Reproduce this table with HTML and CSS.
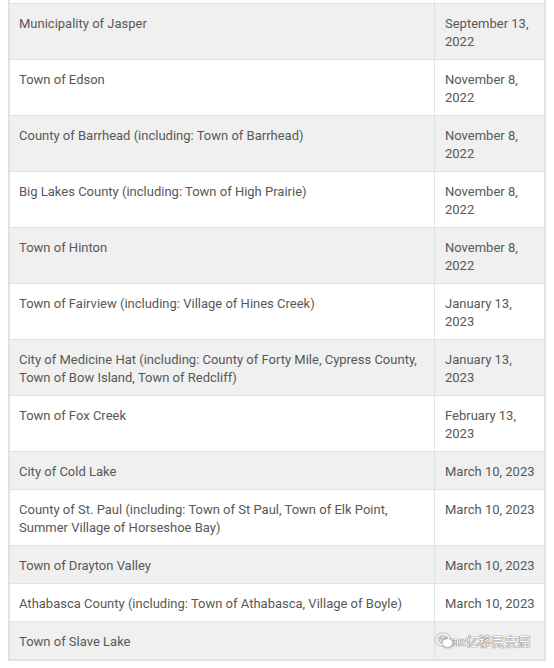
FILE: index.html
```html
<!DOCTYPE html>
<html>
<head>
<meta charset="utf-8">
<link rel="stylesheet" href="styles.css">
</head>
<body>
<div class="page">
<table class="dates">
  <tr class="cut"><td></td><td></td></tr>
  <tr class="alt"><td>Municipality of Jasper</td><td>September 13, 2022</td></tr>
  <tr><td>Town of Edson</td><td>November 8, 2022</td></tr>
  <tr class="alt"><td>County of Barrhead (including: Town of Barrhead)</td><td>November 8, 2022</td></tr>
  <tr><td>Big Lakes County (including: Town of High Prairie)</td><td>November 8, 2022</td></tr>
  <tr class="alt"><td>Town of Hinton</td><td>November 8, 2022</td></tr>
  <tr><td>Town of Fairview (including: Village of Hines Creek)</td><td>January 13, 2023</td></tr>
  <tr class="alt"><td>City of Medicine Hat (including: County of Forty Mile, Cypress County, Town of Bow Island, Town of Redcliff)</td><td>January 13, 2023</td></tr>
  <tr><td>Town of Fox Creek</td><td>February 13, 2023</td></tr>
  <tr class="alt"><td>City of Cold Lake</td><td>March 10, 2023</td></tr>
  <tr><td>County of St. Paul (including: Town of St Paul, Town of Elk Point, Summer Village of Horseshoe Bay)</td><td>March 10, 2023</td></tr>
  <tr class="alt"><td>Town of Drayton Valley</td><td>March 10, 2023</td></tr>
  <tr><td>Athabasca County (including: Town of Athabasca, Village of Boyle)</td><td>March 10, 2023</td></tr>
  <tr class="alt"><td>Town of Slave Lake</td><td></td></tr>
</table>
<div class="watermark">
  <svg class="wm-icon" width="18" height="16" viewBox="0 0 18 16">
    <ellipse cx="7" cy="6.5" rx="6.2" ry="5.2" fill="none" stroke="#fff" stroke-width="1.6"/>
    <ellipse cx="11.5" cy="10" rx="5.2" ry="4.3" fill="#fff" stroke="#bbb" stroke-width="0.8"/>
    <circle cx="5" cy="5.5" r="0.9" fill="#bbb"/>
    <circle cx="9" cy="5.5" r="0.9" fill="#bbb"/>
  </svg>
  <span class="wm-text">ax亿移民安居</span>
</div>
</div>
</body>
</html>
```
FILE: styles.css
```css
html, body {
  margin: 0;
  padding: 0;
  background: #fff;
}
.page {
  position: relative;
  padding: 0 8px;
  height: 668px;
  overflow: hidden;
}
.dates {
  width: 100%;
  border-collapse: collapse;
  font-family: Roboto, "Noto Sans", sans-serif;
  font-size: 13px;
  line-height: 18px;
  color: #585858;
}
.dates td {
  border: 1px solid #e2e2e2;
  padding: 11px 9px 8px 9px;
  vertical-align: top;
}
.dates td:first-child {
  border-left: 2px solid #e2e2e2;
}
.dates td:last-child {
  width: 91px;
  padding-left: 10px;
  padding-right: 8px;
  border-right: 2px solid #e2e2e2;
}
.dates tr:last-child td {
  border-bottom: 2px solid #e2e2e2;
}
.dates tr.cut td {
  padding: 0;
  height: 3px;
  border-top: none;
  line-height: 0;
}
.dates tr.alt td {
  background: #f0f0f0;
}
.watermark {
  position: absolute;
  left: 436px;
  top: 632px;
  display: flex;
  align-items: center;
}
.wm-icon {
  filter: drop-shadow(0 0 1px rgba(0,0,0,0.55));
}
.wm-text {
  font-family: "Noto Sans CJK SC", sans-serif;
  font-size: 13px;
  line-height: 18px;
  color: #fff;
  margin-left: -2px;
  text-shadow: 0 0 1px rgba(0,0,0,0.7), 0 0 1px rgba(0,0,0,0.6);
}
```
